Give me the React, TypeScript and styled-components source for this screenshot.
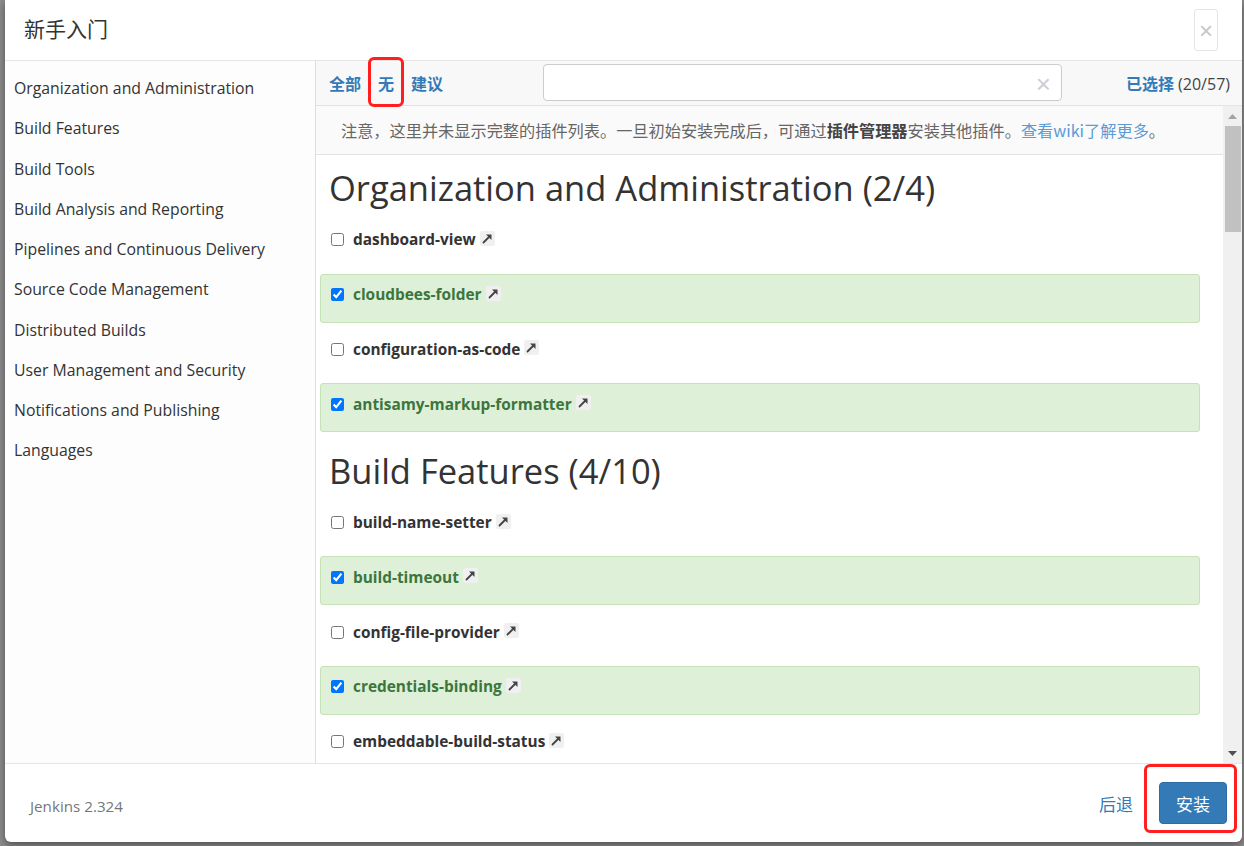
import React from "react";
import styled, { createGlobalStyle } from "styled-components";

const GlobalStyle = createGlobalStyle`
  html, body { margin: 0; padding: 0; background: #8d8d8d; }
  body { font-family: "Open Sans", "Noto Sans CJK SC", sans-serif; color: #333; }
  * { box-sizing: border-box; }
`;

const Backdrop = styled.div`
  width: 1244px;
  height: 846px;
  padding: 0 2px 4px 5px;
  display: flex;
  overflow: hidden;
`;

const Dialog = styled.div`
  position: relative;
  width: 1237px;
  height: 842px;
  background: #fff;
  border-radius: 0 0 6px 6px;
  box-shadow: 0 3px 9px rgba(0, 0, 0, 0.45);
  display: flex;
  flex-direction: column;
  overflow: hidden;
`;

const Header = styled.div`
  height: 61px;
  flex: none;
  border-bottom: 1px solid #e5e5e5;
  display: flex;
  justify-content: space-between;
  align-items: flex-start;
  padding: 0 24px 0 19px;
`;

const Title = styled.h1`
  margin: 0;
  padding-top: 14px;
  font-family: "Noto Sans CJK SC", sans-serif;
  font-size: 21px;
  line-height: 28px;
  font-weight: 400;
  color: #333;
`;

const CloseButton = styled.div`
  margin-top: 9px;
  width: 24px;
  height: 42px;
  border: 1px solid #e5e5e5;
  border-radius: 3px;
  display: flex;
  align-items: center;
  justify-content: center;
  color: #c6c6c6;
  font-family: "Liberation Sans", sans-serif;
  font-size: 24px;
  padding-top: 2px;
`;

const Body = styled.div`
  flex: 1;
  display: flex;
  min-height: 0;
`;

const Sidebar = styled.ul`
  width: 311px;
  flex: none;
  margin: 0;
  padding: 7px 0 0;
  list-style: none;
  border-right: 1px solid #dddddd;
  background: #fdfdfd;
`;

const SideItem = styled.li`
  height: 40.25px;
  display: flex;
  align-items: center;
  padding: 0 9px;
  font-size: 15.8px;
  color: #333;
  white-space: nowrap;
`;

const Main = styled.div`
  flex: 1;
  display: flex;
  flex-direction: column;
  min-width: 0;
`;

const Toolbar = styled.div`
  height: 45px;
  flex: none;
  display: flex;
  align-items: center;
  border-bottom: 1px solid #e3e3e3;
  background: #f8f8f8;
`;

const LinkGroup = styled.div`
  width: 227px;
  flex: none;
  padding-left: 13px;
  display: flex;
  align-items: center;
`;

const ToolLink = styled.span`
  font-family: "Noto Sans CJK SC", sans-serif;
  font-size: 16px;
  font-weight: 700;
  color: #337ab7;
  line-height: 20px;
`;

const Sep = styled.span`
  width: 1px;
  height: 16px;
  margin: 0 8px;
  background: #cfcfcf;
`;

const SearchBox = styled.div`
  width: 519px;
  height: 37px;
  flex: none;
  border: 1px solid #cccccc;
  border-radius: 4px;
  background: #fff;
  display: flex;
  align-items: center;
  justify-content: flex-end;
  padding-right: 10px;
  margin-top: -2px;
`;

const ClearX = styled.span`
  font-family: "Liberation Sans", sans-serif;
  font-size: 26px;
  color: #cfcfcf;
  line-height: 1;
  margin-top: 4px;
`;

const SelectedInfo = styled.div`
  flex: 1;
  text-align: right;
  padding-right: 12px;
  font-size: 16px;
  color: #444;
  white-space: nowrap;
`;

const SelectedLabel = styled.span`
  font-family: "Noto Sans CJK SC", sans-serif;
  font-weight: 700;
  color: #337ab7;
`;

const ScrollArea = styled.div`
  flex: 1;
  display: flex;
  min-height: 0;
`;

const ScrollContent = styled.div`
  flex: 1;
  overflow: hidden;
  min-width: 0;
`;

const Notice = styled.div`
  height: 49px;
  padding: 14px 0 0 25px;
  border-bottom: 1px solid #e3e3e3;
  background: #fafafa;
  font-family: "Noto Sans CJK SC", sans-serif;
  font-size: 16.2px;
  line-height: 20px;
  color: #666;
  white-space: nowrap;
`;

const NoticeStrong = styled.b`
  color: #444;
`;

const NoticeLink = styled.span`
  color: #5b9bd5;
`;

const List = styled.div`
  padding: 0 23px 0 4px;
`;

const Section = styled.section`
  padding-top: 13.3px;
`;

const SectionTitle = styled.h2`
  margin: 0 0 10.5px 9px;
  font-size: 34.5px;
  line-height: 40px;
  font-weight: 500;
  color: #333;
  white-space: nowrap;
`;

const Row = styled.div<{ $selected: boolean }>`
  height: 49px;
  margin-bottom: 5.75px;
  padding: 10px 10px 0;
  border: 1px solid ${(p) => (p.$selected ? "#c6e3b8" : "transparent")};
  border-radius: 3px;
  background: ${(p) => (p.$selected ? "#dff0d8" : "transparent")};
  display: flex;
  align-items: flex-start;
`;

const RowLine = styled.div`
  height: 20px;
  display: flex;
  align-items: center;
`;

const Check = styled.input`
  width: 13px;
  height: 13px;
  margin: 0;
`;

const PluginName = styled.span<{ $selected: boolean }>`
  margin-left: 9px;
  font-size: 15.4px;
  font-weight: 700;
  color: ${(p) => (p.$selected ? "#3c763d" : "#333")};
  white-space: nowrap;
`;

const ArrowBox = styled.span`
  margin-left: 4px;
  width: 15px;
  height: 15px;
  border-radius: 2px;
  background: #f0f0f0;
  display: inline-flex;
  align-items: center;
  justify-content: center;
  margin-top: -3px;
`;

const Scrollbar = styled.div`
  width: 19px;
  flex: none;
  background: #f0f0f0;
  display: flex;
  flex-direction: column;
`;

const ScrollBtn = styled.div`
  height: 20px;
  display: flex;
  align-items: center;
  justify-content: center;
`;

const Thumb = styled.div`
  height: 106px;
  margin: 0 1px 0 2px;
  background: #c1c1c1;
`;

const Spacer = styled.div`
  flex: 1;
`;

const Footer = styled.div`
  height: 79px;
  flex: none;
  border-top: 1px solid #e5e5e5;
  display: flex;
  align-items: center;
  padding: 0 15px 0 25px;
`;

const Version = styled.span`
  font-size: 15.2px;
  color: #777;
  margin-top: 5px;
`;

const FooterRight = styled.div`
  margin-left: auto;
  display: flex;
  align-items: center;
`;

const BackLink = styled.span`
  font-family: "Noto Sans CJK SC", sans-serif;
  font-size: 17px;
  color: #337ab7;
  margin-right: 26px;
`;

const InstallButton = styled.button`
  width: 68px;
  height: 42px;
  border: 1px solid #2e6da4;
  border-radius: 4px;
  background: #337ab7;
  color: #fff;
  font-family: "Noto Sans CJK SC", sans-serif;
  font-size: 17px;
  padding: 0;
`;

const Annotation = styled.div<{ $x: number; $y: number; $w: number; $h: number }>`
  position: absolute;
  left: ${(p) => p.$x}px;
  top: ${(p) => p.$y}px;
  width: ${(p) => p.$w}px;
  height: ${(p) => p.$h}px;
  border: 3px solid #ff1f1f;
  border-radius: 6px;
  pointer-events: none;
`;

const Arrow = () => (
  <svg width="11" height="11" viewBox="0 0 11 11">
    <path d="M1.5 9.5 L8 3" stroke="#444" strokeWidth="1.8" strokeLinecap="round" />
    <path d="M4 1.5 L9.5 1.5 L9.5 7 Z" fill="#444" />
  </svg>
);

const Triangle = ({ up, color }: { up: boolean; color: string }) => (
  <svg width="9" height="5" viewBox="0 0 9 5">
    <path d={up ? "M0 5 L4.5 0 L9 5 Z" : "M0 0 L4.5 5 L9 0 Z"} fill={color} />
  </svg>
);

const categories = [
  "Organization and Administration",
  "Build Features",
  "Build Tools",
  "Build Analysis and Reporting",
  "Pipelines and Continuous Delivery",
  "Source Code Management",
  "Distributed Builds",
  "User Management and Security",
  "Notifications and Publishing",
  "Languages",
];

const sections: { title: string; items: [string, boolean][] }[] = [
  {
    title: "Organization and Administration (2/4)",
    items: [
      ["dashboard-view", false],
      ["cloudbees-folder", true],
      ["configuration-as-code", false],
      ["antisamy-markup-formatter", true],
    ],
  },
  {
    title: "Build Features (4/10)",
    items: [
      ["build-name-setter", false],
      ["build-timeout", true],
      ["config-file-provider", false],
      ["credentials-binding", true],
      ["embeddable-build-status", false],
    ],
  },
];

export default function App() {
  return (
    <>
      <GlobalStyle />
      <Backdrop>
        <Dialog>
          <Header>
            <Title>新手入门</Title>
            <CloseButton>×</CloseButton>
          </Header>
          <Body>
            <Sidebar>
              {categories.map((c) => (
                <SideItem key={c}>{c}</SideItem>
              ))}
            </Sidebar>
            <Main>
              <Toolbar>
                <LinkGroup>
                  <ToolLink>全部</ToolLink>
                  <Sep />
                  <ToolLink>无</ToolLink>
                  <Sep />
                  <ToolLink>建议</ToolLink>
                </LinkGroup>
                <SearchBox>
                  <ClearX>×</ClearX>
                </SearchBox>
                <SelectedInfo>
                  <SelectedLabel>已选择</SelectedLabel> (20/57)
                </SelectedInfo>
              </Toolbar>
              <ScrollArea>
                <ScrollContent>
                  <Notice>
                    注意，这里并未显示完整的插件列表。一旦初始安装完成后，可通过
                    <NoticeStrong>插件管理器</NoticeStrong>安装其他插件。
                    <NoticeLink>查看wiki了解更多</NoticeLink>。
                  </Notice>
                  <List>
                    {sections.map((s) => (
                      <Section key={s.title}>
                        <SectionTitle>{s.title}</SectionTitle>
                        {s.items.map(([name, sel]) => (
                          <Row key={name} $selected={sel}>
                            <RowLine>
                              <Check type="checkbox" checked={sel} readOnly />
                              <PluginName $selected={sel}>{name}</PluginName>
                              <ArrowBox>
                                <Arrow />
                              </ArrowBox>
                            </RowLine>
                          </Row>
                        ))}
                      </Section>
                    ))}
                  </List>
                </ScrollContent>
                <Scrollbar>
                  <ScrollBtn>
                    <Triangle up color="#a3a3a3" />
                  </ScrollBtn>
                  <Thumb />
                  <Spacer />
                  <ScrollBtn>
                    <Triangle up={false} color="#505050" />
                  </ScrollBtn>
                </Scrollbar>
              </ScrollArea>
            </Main>
          </Body>
          <Footer>
            <Version>Jenkins 2.324</Version>
            <FooterRight>
              <BackLink>后退</BackLink>
              <InstallButton>安装</InstallButton>
            </FooterRight>
          </Footer>
          <Annotation $x={363} $y={57} $w={36} $h={50} />
          <Annotation $x={1139} $y={764} $w={93} $h={69} />
        </Dialog>
      </Backdrop>
    </>
  );
}
